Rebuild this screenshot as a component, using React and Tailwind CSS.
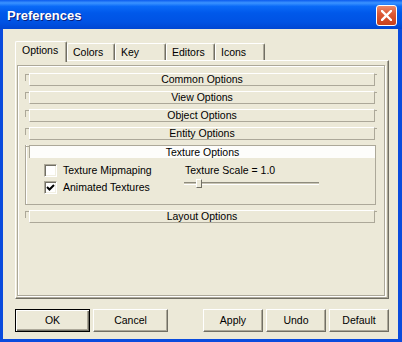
import React from 'react';

const tabs = [
  { label: 'Options', w: 'w-[52px]', active: true },
  { label: 'Colors', w: 'w-[48px]' },
  { label: 'Key', w: 'w-[51px]' },
  { label: 'Editors', w: 'w-[49px]' },
  { label: 'Icons', w: 'w-[50px]' },
];

const collapsed = ['Common Options', 'View Options', 'Object Options', 'Entity Options'];

const Header = ({ label, pressed }) => (
  <div
    className={
      pressed
        ? 'w-[346px] h-[13px] flex items-center justify-center leading-none bg-[#FDFDFB] border-t border-l border-[#ACA899]'
        : 'w-[346px] h-[13px] flex items-center justify-center leading-none border border-t-white border-l-white border-r-[#ACA899] border-b-[#ACA899]'
    }
  >
    {label}
  </div>
);

const Section = ({ label }) => (
  <div className="flex items-start h-[13px]">
    <div className="w-[4px] h-[7px] mt-[1px] border-l border-t border-[#ACA899]" />
    <Header label={label} />
    <div className="w-[2px] h-[1px] mt-[1px] border-t border-[#ACA899]" />
  </div>
);

const Checkbox = ({ checked, label }) => (
  <div className="flex items-center h-[13px] gap-[6px]">
    <div className="w-[13px] h-[13px] flex items-center justify-center bg-white border border-t-[#ACA899] border-l-[#ACA899] border-b-white border-r-white shadow-[inset_1px_1px_0_#716F64,inset_-1px_-1px_0_#F1EFE2]">
      {checked && (
        <svg width="9" height="9" viewBox="0 0 9 9">
          <path d="M1 4 L3.5 6.5 L8 2" stroke="#000" strokeWidth="2" fill="none" />
        </svg>
      )}
    </div>
    <span className="leading-none">{label}</span>
  </div>
);

const Button = ({ label, w, primary }) => (
  <button
    className={
      primary
        ? `${w} h-[23px] bg-[#ECE9D8] border border-black shadow-[inset_1px_1px_0_#fff,inset_-1px_-1px_0_#716F64,inset_-2px_-2px_0_#ACA899] leading-none`
        : `${w} h-[23px] bg-[#ECE9D8] border border-t-white border-l-white border-r-[#716F64] border-b-[#716F64] shadow-[inset_-1px_-1px_0_#ACA899] leading-none`
    }
  >
    {label}
  </button>
);

export default function App() {
  return (
    <div className="w-[402px] h-[342px] bg-[#0A4BDD] font-['Liberation_Sans',Arial,sans-serif] text-[10.5px] text-black">
      {/* Title bar */}
      <div className="h-[29px] flex items-center justify-between pl-[7px] pr-[5px] bg-[linear-gradient(180deg,#0B5BEE_0%,#3B93FF_10%,#0A6AF7_22%,#0058EA_45%,#0053E4_75%,#0046D2_100%)]">
        <span className="mt-[1px] text-[13px] font-bold text-white leading-none [text-shadow:1px_1px_0_#0A1E7A]">
          Preferences
        </span>
        <div className="mt-[1px] w-[21px] h-[21px] rounded-[3px] border border-white flex items-center justify-center bg-[linear-gradient(180deg,#EC8A6A_0%,#DD5A36_40%,#C8401C_100%)]">
          <svg width="11" height="11" viewBox="0 0 11 11">
            <path d="M1 1 L10 10 M10 1 L1 10" stroke="#fff" strokeWidth="2.4" strokeLinecap="square" />
          </svg>
        </div>
      </div>

      {/* Client area */}
      <div className="ml-[3px] mr-[4px] h-[310px] bg-[#ECE9D8] pt-[12px] pl-[12px]">
        {/* Tabs */}
        <div className="flex items-end h-[19px]">
          {tabs.map((t) =>
            t.active ? (
              <div
                key={t.label}
                className={`${t.w} relative z-10 -mb-[2px] h-[21px] pl-[6px] pt-[2px] bg-[#ECE9D8] border-l border-t border-white border-r border-r-[#716F64] rounded-t-[2px] shadow-[inset_-1px_0_0_#ACA899] leading-[13px]`}
              >
                {t.label}
              </div>
            ) : (
              <div
                key={t.label}
                className={`${t.w} h-[17px] pl-[5px] pt-[2px] border-l border-t border-white border-r border-r-[#716F64] rounded-t-[2px] shadow-[inset_-1px_0_0_#ACA899] leading-[13px]`}
              >
                {t.label}
              </div>
            )
          )}
        </div>

        {/* Tab panel */}
        <div className="w-[374px] h-[239px] border border-t-white border-l-white border-r-[#716F64] border-b-[#716F64] shadow-[inset_-1px_-1px_0_#ACA899] pt-[4px] pl-[1px]">
          <div className="w-[368px] h-[231px] border border-[#ACA899] shadow-[inset_1px_1px_0_#fff,1px_1px_0_#fff] pt-[7px] pl-[7px] flex flex-col gap-[5px]">
            {collapsed.map((s) => (
              <Section key={s} label={s} />
            ))}

            {/* Expanded: Texture Options */}
            <div className="w-[351px] h-[60px] border-l border-r border-b border-[#ACA899] shadow-[inset_1px_0_0_#fff]">
              <div className="flex items-start">
                <div className="w-[3px] h-[1px] mt-[1px] border-t border-[#ACA899]" />
                <Header label="Texture Options" pressed />
              </div>
              <div className="flex pt-[6px] pl-[18px]">
                <div className="w-[140px] flex flex-col gap-[4px]">
                  <Checkbox label="Texture Mipmaping" />
                  <Checkbox label="Animated Textures" checked />
                </div>
                <div className="flex flex-col">
                  <span className="pl-[1px] leading-[13px]">Texture Scale = 1.0</span>
                  <div className="relative mt-[2px] w-[135px] h-[9px] flex items-center">
                    <div className="w-full h-[3px] border-t border-[#8E8B7D] border-b border-b-white bg-[#C9C5B4]" />
                    <div className="absolute left-[12px] top-0 w-[6px] h-[9px] bg-[#ECE9D8] border border-t-white border-l-white border-r-[#716F64] border-b-[#716F64]" />
                  </div>
                </div>
              </div>
            </div>

            <Section label="Layout Options" />
          </div>
        </div>

        {/* Buttons */}
        <div className="mt-[10px] w-[374px] flex items-center gap-[3px]">
          <Button label="OK" w="w-[75px]" primary />
          <Button label="Cancel" w="w-[75px]" />
          <div className="flex-1" />
          <Button label="Apply" w="w-[60px]" />
          <Button label="Undo" w="w-[60px]" />
          <Button label="Default" w="w-[60px]" />
        </div>
      </div>
    </div>
  );
}
